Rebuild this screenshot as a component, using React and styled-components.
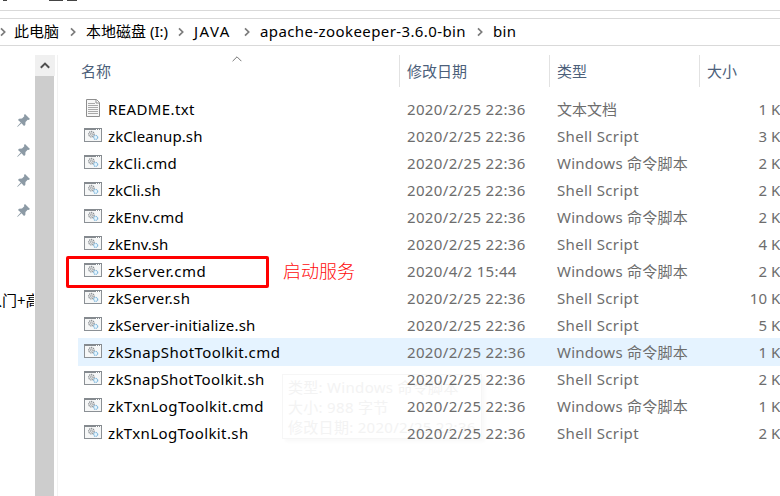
import React from "react";
import styled, { createGlobalStyle } from "styled-components";

const Global = createGlobalStyle`
  * { box-sizing: border-box; }
  body { margin: 0; background: #fff; overflow: hidden; }
`;
const Window = styled.div`
  width: 780px; height: 496px; overflow: hidden; position: relative; isolation: isolate;
  display: flex; flex-direction: column; background: #fff; color: #000;
  font: 15px/20px "Noto Sans", "Noto Sans CJK SC", sans-serif;
  white-space: nowrap;
`;
const Ribbon = styled.div`
  height: 11px; flex: none; border-bottom: 1px solid #d9d9d9;
  svg { display: block; }
`;
const AddressBar = styled.div`
  height: 28px; flex: none; margin-top: 7px;
  border: solid #d9d9d9; border-width: 1px 0;
  display: flex; align-items: center;
`;
const Crumb = styled.span`
  flex: none; width: ${(p) => p.$width}px; padding-bottom: 2px;
  letter-spacing: ${(p) => p.$track || 0}px;
`;
const Separator = styled.svg`
  flex: none; width: 6px; height: 10px; margin-right: ${(p) => p.$gap}px;
  fill: none; stroke: #7b7b7b; stroke-width: 1.7;
`;
const Main = styled.div`display: flex; flex: 1; padding-top: 9px; min-height: 0;`;
const Sidebar = styled.div`
  width: 35px; flex: none; overflow: hidden; padding-top: 59px;
  display: flex; flex-direction: column;
`;
const Pin = styled.svg`
  width: 13px; height: 13px; margin: 0 0 17px 17px; flex: none; fill: #8c9aa5;
`;
const TreeText = styled.div`margin: 56px 0 0 -13px; width: 47px; overflow: hidden;`;
const Scrollbar = styled.div`
  width: 19px; flex: none; background: #cdcdcd;
`;
const ScrollButton = styled.div`
  height: 21px; width: 20px; background: #f0f0f0; display: grid; place-items: center;
  svg { fill: none; stroke: #505050; stroke-width: 2; }
`;
const Content = styled.div`
  flex: 1; margin-left: 3px; border-left: 1px solid #f2f2f2; min-width: 0;
`;
const columns = "321px 150px 150px 94px";
const Header = styled.div`
  display: grid; grid-template-columns: ${columns}; height: 32px; margin: 0 0 8px 20px;
  color: #4c607a; position: relative; width: 715px;
`;
const HeaderCell = styled.div`
  padding: 6px 0 0 ${(p) => (p.$first ? 3 : 7)}px;
  border-left: ${(p) => (p.$first ? 0 : "1px solid #e2e2e2")};
`;
const SortArrow = styled.svg`
  position: absolute; left: 154px; top: 1px; fill: none; stroke: #777; stroke-width: 1;
`;
const Row = styled.div`
  display: grid; grid-template-columns: ${columns}; align-items: center;
  height: 27px; margin-left: 20px; width: 715px; color: #6d6d6d;
  background: ${(p) => (p.$active ? "#e5f3ff" : "transparent")};
  box-shadow: ${(p) => (p.$active ? "0 1px #e5f3ff" : "none")};
`;
const NameCell = styled.div`
  display: flex; align-items: center; color: #000; padding-left: 6px; gap: 6px;
  svg { flex: none; }
`;
const Cell = styled.div`padding-left: 8px; letter-spacing: ${(p) => p.$track || 0}px;`;
const Name = styled.span`letter-spacing: ${(p) => p.$track || 0}px;`;
const SizeCell = styled.div`
  display: grid; grid-template-columns: 68px 20px; column-gap: 4px; text-align: right;
  > :last-child { text-align: left; }
`;
const Marker = styled.div`
  position: absolute; left: 66px; top: 256px; width: 203px; height: 32px;
  border: 3px solid #ff0000; border-radius: 2px;
`;
const Note = styled.div`
  position: absolute; left: 283px; top: 259px; color: #ff0b0b;
  font-size: 18px; line-height: 24px; font-weight: 300;
`;
const Tooltip = styled.div`
  position: absolute; z-index: -1; left: 282px; top: 374px; width: 200px; height: 65px; overflow: hidden;
  border: 1px solid #f6f6f6; box-shadow: 3px 3px 3px #fafafa; color: #f3f3f3;
  padding: 2px 5px; letter-spacing: 0.3px;
`;

const Chevron = ({ gap }) => (
  <Separator $gap={gap} viewBox="0 0 6 10"><path d="M1 1.3 4.7 5 1 8.7" /></Separator>
);
const TextIcon = () => (
  <svg width="18" height="19" viewBox="0 0 18 19">
    <path d="M2.5 .5h10l3 3v14h-13z" fill="#f7f7f7" stroke="#8e8e8e" />
    <path d="M12 .5v3.5h3.5" fill="#fff" stroke="#8e8e8e" />
    <path d="M4 4.5h7M4 6.5h10M4 8.5h10M4 10.5h10M4 12.5h10M4 14.5h10" stroke="#a9a9a9" />
  </svg>
);
const ScriptIcon = () => (
  <svg width="18" height="15" viewBox="0 0 18 15">
    <rect x=".5" y=".5" width="17" height="13" fill="#f6f7f7" stroke="#8b9095" />
    <path d="M0 1h18" stroke="#858a8f" strokeWidth="2" />
    <path d="M12 1.5h1M14 1.5h1M16 1.5h1" stroke="#fff" />
    <circle cx="7.4" cy="6.2" r="2.7" fill="#eee" stroke="#8e9397" strokeWidth="1.3" strokeDasharray="1.3 .7" />
    <circle cx="7.4" cy="6.2" r="1.1" fill="none" stroke="#8e9397" strokeWidth=".7" />
    <circle cx="11.7" cy="9.4" r="2" fill="#e7f5fd" stroke="#83b9dc" strokeWidth="1.2" strokeDasharray="1.2 .5" />
  </svg>
);
const SHELL = "Shell Script";
const BATCH = "Windows 命令脚本";
const files = [
  ["README.txt", "文本文档", "1", 0.4],
  ["zkCleanup.sh", SHELL, "3", 0.08],
  ["zkCli.cmd", BATCH, "2", 0.25],
  ["zkCli.sh", SHELL, "2", 0],
  ["zkEnv.cmd", BATCH, "2", 0.2],
  ["zkEnv.sh", SHELL, "4", 0],
  ["zkServer.cmd", BATCH, "2", 0.5],
  ["zkServer.sh", SHELL, "10", 0.36],
  ["zkServer-initialize.sh", SHELL, "5", 0.18],
  ["zkSnapShotToolkit.cmd", BATCH, "1", 0.43],
  ["zkSnapShotToolkit.sh", SHELL, "2", 0.37],
  ["zkTxnLogToolkit.cmd", BATCH, "1", 0.44],
  ["zkTxnLogToolkit.sh", SHELL, "2", 0.39],
];
const typeTrack = { [SHELL]: -0.25 + 0.6, [BATCH]: 0.25 };

export default function App() {
  return (
    <Window>
      <Global />
      <Ribbon>
        <svg width="90" height="3"><path d="M3 .5h4M49 .5h14M67 .5h10" stroke="#444" /></svg>
      </Ribbon>
      <AddressBar>
        <Chevron gap={8} />
        <Crumb $width={56}>此电脑</Crumb><Chevron gap={10} />
        <Crumb $width={92}>本地磁盘 (I:)</Crumb><Chevron gap={10} />
        <Crumb $width={50} $track={1.4}>JAVA</Crumb><Chevron gap={10} />
        <Crumb $width={217} $track={0.4}>apache-zookeeper-3.6.0-bin</Crumb><Chevron gap={10} />
        <Crumb $width={40} $track={0.3}>bin</Crumb>
      </AddressBar>
      <Main>
        <Sidebar>
          {[0, 1, 2, 3].map((i) => (
            <Pin key={i} viewBox="0 0 13 13"><path d="M8 0 13 5 11.5 6 10.7 5.8 8.5 8 8.3 11 7 12 4.5 9.2 1 12.4 0 13 .6 12 3.8 8.5 1 6 2 4.8 5 4.6 7.3 2.3 7 1z" /></Pin>
          ))}
          <TreeText>入门+高</TreeText>
        </Sidebar>
        <Scrollbar>
          <ScrollButton><svg width="10" height="7"><path d="M.8 5.8 5 1.6 9.2 5.8" /></svg></ScrollButton>
        </Scrollbar>
        <Content>
          <Header>
            <HeaderCell $first>名称</HeaderCell>
            <HeaderCell>修改日期</HeaderCell>
            <HeaderCell>类型</HeaderCell>
            <HeaderCell>大小</HeaderCell>
            <SortArrow width="10" height="6"><path d="M.6 5.2 5 .8 9.4 5.2" /></SortArrow>
          </Header>
          {files.map(([name, type, size, track], i) => (
            <Row key={name} $active={i === 9}>
              <NameCell>{i === 0 ? <TextIcon /> : <ScriptIcon />}<Name $track={track}>{name}</Name></NameCell>
              <Cell $track={0.35}>{i === 6 ? "2020/4/2 15:44" : "2020/2/25 22:36"}</Cell>
              <Cell $track={typeTrack[type]}>{type}</Cell>
              <SizeCell><span>{size}</span><span>KB</span></SizeCell>
            </Row>
          ))}
        </Content>
      </Main>
      <Tooltip>
        <div>类型: Windows 命令脚本</div>
        <div>大小: 988 字节</div>
        <div>修改日期: 2020/2/25 22:36</div>
      </Tooltip>
      <Marker />
      <Note>启动服务</Note>
    </Window>
  );
}
